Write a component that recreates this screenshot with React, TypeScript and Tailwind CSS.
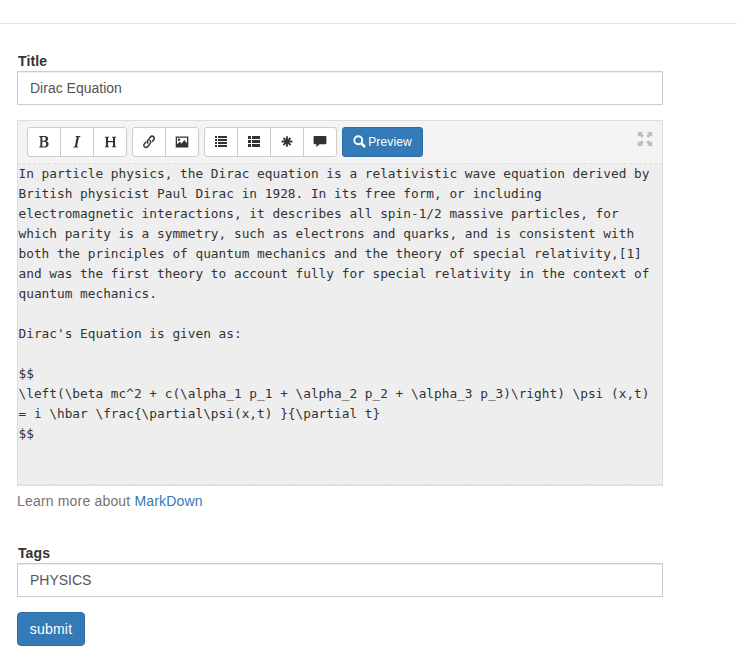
import React from "react";

const icon = "block h-[14px] w-[14px] fill-[#333]";

const Bold = () => (
  <svg viewBox="0 0 14 14" className={icon}>
    <path fillRule="evenodd" d="M2.200 1h5.600c2.200 0 3.300 1 3.300 2.700 0 1.200-.7 2.100-1.900 2.500 1.500.3 2.400 1.300 2.400 2.800 0 2.100-1.400 3.500-3.800 3.500H2.200v-.8l1.200-.4V2.200l-1.200-.4zM5.300 2v3.700h1.500c1.300 0 1.900-.7 1.900-1.900C8.700 2.600 8.100 2 6.900 2zM5.300 6.700v4.700h1.900c1.300 0 2-.8 2-2.300 0-1.600-.8-2.400-2.200-2.400z" />
  </svg>
);
const Italic = () => (
  <svg viewBox="0 0 14 14" className={icon}>
    <path d="M5.800 1h4.700l-.2.800-1.400.4-1.900 9.200 1.200.4-.2.700H3.200l.2-.7 1.400-.4 1.900-9.200-1.100-.4z" />
  </svg>
);
const Header = () => (
  <svg viewBox="0 0 14 14" className={icon}>
    <path d="M1.800 1.700H6v.8l-1 .3v3.300h5V2.800l-1-.3v-.8h4.200v.8l-1.100.3v8.400l1.100.3v.8H9v-.8l1-.3V7.200H5v4l1 .3v.8H1.800v-.8l1.100-.3V2.800l-1.100-.3z" />
  </svg>
);
const Link = () => (
  <svg viewBox="0 0 14 14" className="block h-[14px] w-[14px] fill-none stroke-[#333] stroke-[1.500]">
    <path d="M6.300 8.500C5.200 7.600 5 6.300 6 5.100l2.300-2.900c.9-1.100 2.200-1.300 3.200-.5s1.100 2 .2 3.100L10.200 6.700M7.600 5.200c1.200.8 1.400 2.200.5 3.400l-2.300 2.900c-.9 1.100-2.200 1.300-3.200.5s-1.100-2-.2-3.100l1.700-2.100" />
  </svg>
);
const Picture = () => (
  <svg viewBox="0 0 14 14" className={icon}>
    <path fillRule="evenodd" d="M.7 1.500h12.600v11H.7zM2 2.800v6.600l2.700-2.700 2 1.900 2.600-3.500L12 8.200V2.800zM4 3.500a1.200 1.200 0 1 1 0 2.400 1.200 1.200 0 0 1 0-2.400z" />
  </svg>
);
const List = () => (
  <svg viewBox="0 0 14 14" className={icon}>
    <path d="M1 1h2v2H1zM4 1h9v2H4zM1 4h2v2H1zM4 4h9v2H4zM1 7h2v2H1zM4 7h9v2H4zM1 10h2v2H1zM4 10h9v2H4z" />
  </svg>
);
const ThList = () => (
  <svg viewBox="0 0 14 14" className={icon}>
    <path d="M1 1h3v3H1zM5 1h8v3H5zM1 5h3v3H1zM5 5h8v3H5zM1 9h3v3H1zM5 9h8v3H5z" />
  </svg>
);
const Asterisk = () => (
  <svg viewBox="0 0 14 14" className="block h-[14px] w-[14px] fill-none stroke-[#333] stroke-[1.800]">
    <path d="M7 1.200v10.600M1.700 6.500h10.600M3.400 2.900l7.200 7.200M10.600 2.900l-7.200 7.200" />
  </svg>
);
const Comment = () => (
  <svg viewBox="0 0 14 14" className={icon}>
    <path d="M1.600 1h10.800q1 0 1 1v6.300q0 1-1 1H6.500L3.400 12.300V9.300H1.600q-1 0-1-1V2q0-1 1-1z" />
  </svg>
);
const Search = () => (
  <svg viewBox="0 0 14 14" className="-mt-px block h-[13px] w-[13px] shrink-0 fill-none stroke-white">
    <circle cx="5.700" cy="5.700" r="4.300" strokeWidth="2" />
    <path d="M8.900 8.900l4 4" strokeWidth="2.800" />
  </svg>
);
const Fullscreen = () => (
  <svg viewBox="0 0 16 16" className="block h-4 w-4 fill-[#bbb]">
    <path d="M.8 1H6L4.500 2.500l2.300 2.300-2 2-2.300-2.300L.8 6zM15.200 1v5l-1.500-1.500-2.300 2.300-2-2 2.300-2.300L10.200 1zM.8 15v-5l1.700 1.500 2.300-2.300 2 2-2.300 2.300L6 15zM15.200 15h-5l1.500-1.500-2.300-2.300 2-2 2.300 2.300 1.500-1.500z" />
  </svg>
);

const groups = [
  [Bold, Italic, Header],
  [Link, Picture],
  [List, ThList, Asterisk, Comment],
];

const article = `In particle physics, the Dirac equation is a relativistic wave equation derived by
British physicist Paul Dirac in 1928. In its free form, or including
electromagnetic interactions, it describes all spin-1/2 massive particles, for
which parity is a symmetry, such as electrons and quarks, and is consistent with
both the principles of quantum mechanics and the theory of special relativity,[1]
and was the first theory to account fully for special relativity in the context of
quantum mechanics.

Dirac's Equation is given as:

$$
\\left(\\beta mc^2 + c(\\alpha_1 p_1 + \\alpha_2 p_2 + \\alpha_3 p_3)\\right) \\psi (x,t)
= i \\hbar \\frac{\\partial\\psi(x,t) }{\\partial t}
$$`;

function Field({ label, value }: { label: string; value: string }) {
  return (
    <div>
      <div className="h-5 pl-px text-[14px] leading-5 font-bold tracking-[0.1px] text-[#333]">{label}</div>
      <div className="h-[34px] border border-[#ccc] bg-white px-3 text-[14px] leading-8 text-[#555] shadow-[inset_0_1px_1px_rgba(0,0,0,0.075)]">
        {value}
      </div>
    </div>
  );
}

export default function App() {
  return (
    <div className="h-[656px] overflow-hidden bg-white font-['Liberation_Sans',Arial,sans-serif]">
      <div className="h-6 w-[737px] border-b border-[#e5e5e5]" />
      <main className="ml-[17px] w-[646px] pt-[27px]">
        <Field label="Title" value="Dirac Equation" />

        <section className="mt-[15px] h-[366px] border border-[#ddd] bg-[#eee]">
          <div className="flex h-[43px] items-start gap-[5px] border-b border-dashed border-[#ddd] bg-[#f4f4f4] pt-[6px] pl-[9px] pr-[9px]">
            {groups.map((group, i) => (
              <div key={i} className="flex h-[30px] divide-x divide-[#ccc] rounded-[3px] border border-[#ccc] bg-white">
                {group.map((Icon, j) => (
                  <button key={j} className="flex w-[33px] items-center justify-center last:w-8">
                    <Icon />
                  </button>
                ))}
              </div>
            ))}
            <button className="flex h-[30px] w-[81px] items-center justify-center gap-0.5 rounded-[3px] border border-[#2e6da4] bg-[#337ab7] text-[12px] tracking-[0.15px] text-white">
              <Search />
              Preview
            </button>
            <div className="mt-1 ml-auto">
              <Fullscreen />
            </div>
          </div>
          <pre className="h-[321px] border-b border-dashed border-[#ddd] pl-[0.5px] font-['DejaVu_Sans_Mono',monospace] text-[12.790px] leading-5 text-[#333]">
            {article}
          </pre>
        </section>

        <p className="mt-[5px] text-[14px] leading-5 tracking-[0.18px] text-[#737373]">
          Learn more about <a className="text-[#337ab7]">MarkDown</a>
        </p>

        <div className="mt-8">
          <Field label="Tags" value="PHYSICS" />
        </div>
        <button className="mt-[15px] h-[34px] w-[68px] rounded-[4px] border border-[#2e6da4] bg-[#337ab7] text-[14px] tracking-[0.2px] text-white">
          submit
        </button>
      </main>
    </div>
  );
}
